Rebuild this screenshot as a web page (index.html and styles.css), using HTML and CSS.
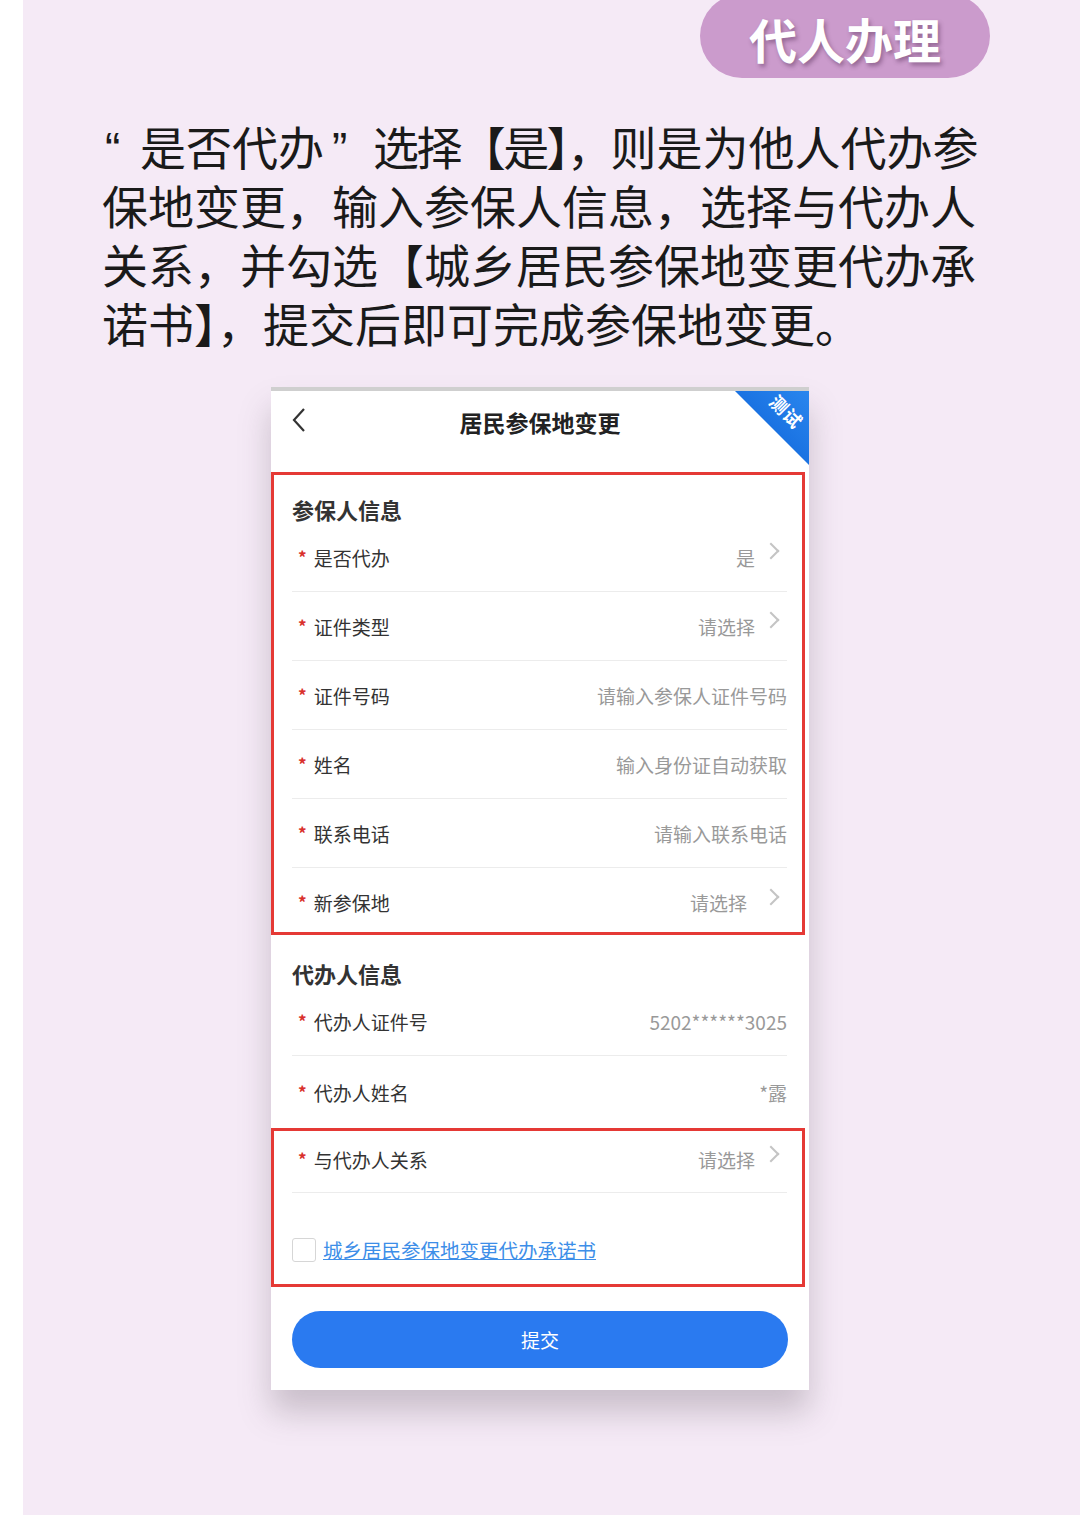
FILE: index.html
```html
<!DOCTYPE html>
<html lang="zh-CN">
<head>
  <meta charset="UTF-8" />
  <meta name="viewport" content="width=device-width, initial-scale=1.0"/>
  <title>代人办理</title>
  <link rel="stylesheet" href="styles.css">
</head>
<body>
  <div class="page">
    <div class="badge-bar">
      <div class="badge">代人办理</div>
    </div>

    <p class="intro"><span class="q open">“</span>是否代办<span class="q close">”</span><span class="tight">选择【是】，</span>则是为他人代办参<br>保地变更，输入参保人信息，选择与代办人<br>关系，并勾选【城乡居民参保地变更代办承<br>诺书】，提交后即可完成参保地变更。</p>

    <div class="phone">
      <div class="ribbon"><span>测试</span></div>
      <div class="topbar">
        <svg class="back" width="16" height="26" viewBox="0 0 16 26"><path d="M13 2 L3 13 L13 24" fill="none" stroke="#333" stroke-width="2.2"/></svg>
        <div class="title">居民参保地变更</div>
      </div>

      <div class="mark first">
        <div class="sec-title">参保人信息</div>
        <div class="row"><span class="label"><i>*</i>是否代办</span><span class="value">是</span><span class="arrow"></span></div>
        <div class="row"><span class="label"><i>*</i>证件类型</span><span class="value">请选择</span><span class="arrow"></span></div>
        <div class="row"><span class="label"><i>*</i>证件号码</span><span class="value">请输入参保人证件号码</span></div>
        <div class="row"><span class="label"><i>*</i>姓名</span><span class="value">输入身份证自动获取</span></div>
        <div class="row"><span class="label"><i>*</i>联系电话</span><span class="value">请输入联系电话</span></div>
        <div class="row last"><span class="label"><i>*</i>新参保地</span><span class="value">请选择</span><span class="arrow wide"></span></div>
      </div>

      <div class="plain">
        <div class="sec-title second">代办人信息</div>
        <div class="row"><span class="label"><i>*</i>代办人证件号</span><span class="value">5202******3025</span></div>
        <div class="row last"><span class="label"><i>*</i>代办人姓名</span><span class="value">*露</span></div>
      </div>

      <div class="mark second-box">
        <div class="row short"><span class="label"><i>*</i>与代办人关系</span><span class="value">请选择</span><span class="arrow"></span></div>
        <div class="agree">
          <span class="check"></span>
          <span class="link">城乡居民参保地变更代办承诺书</span>
        </div>
      </div>

      <div class="submit">提交</div>
    </div>
  </div>
</body>
</html>
```

FILE: styles.css
```css
body {
  margin: 0;
  background: #fff;
  font-family: "Noto Sans CJK SC", "Noto Sans", sans-serif;
}

.page {
  margin-left: 23px;
  background: #f5eaf6;
  min-height: 1515px;
  overflow: hidden;
}

.badge-bar {
  display: flex;
  justify-content: flex-end;
  padding-right: 90px;
}

.badge {
  width: 290px;
  height: 84px;
  margin-top: -6px;
  border-radius: 42px;
  background: #cb9bcc;
  color: #fff;
  font-size: 48px;
  font-weight: 700;
  display: flex;
  align-items: center;
  justify-content: center;
  padding-top: 4px;
  box-sizing: border-box;
  text-shadow: 2px 3px 4px rgba(80, 40, 80, 0.45);
}

.intro {
  margin: 38px 0 0 79px;
  font-size: 46px;
  line-height: 59px;
  color: #1a1a1a;
  white-space: nowrap;
}

.q {
  display: inline-block;
  font-family: "Liberation Sans", sans-serif;
  line-height: 1;
  box-sizing: border-box;
}

.q.open {
  width: 38px;
  padding-left: 3px;
}

.q.close {
  width: 49px;
  padding-left: 8px;
}

.tight {
  letter-spacing: -2.6px;
}

.phone {
  position: relative;
  margin: 35px 0 0 248px;
  width: 538px;
  background: #fff;
  border-top: 4px solid #cfcfcf;
  box-shadow: 0 22px 30px rgba(90, 80, 90, 0.28);
  overflow: hidden;
  padding-bottom: 22px;
}

.ribbon {
  position: absolute;
  top: 0;
  right: 0;
  width: 74px;
  height: 74px;
  background: linear-gradient(45deg, #0a5fd6, #2a86ee);
  clip-path: polygon(0 0, 100% 0, 100% 100%);
}

.ribbon span {
  position: absolute;
  top: 7px;
  right: 3px;
  transform: rotate(45deg);
  color: #fff;
  font-size: 18px;
  font-weight: 700;
  letter-spacing: 1px;
}

.topbar {
  height: 81px;
  display: flex;
  align-items: center;
  justify-content: center;
  position: relative;
}

.back {
  position: absolute;
  left: 20px;
  top: 16px;
}

.title {
  font-size: 23px;
  font-weight: 700;
  color: #222;
  margin-top: -20px;
}

.mark {
  border: 3px solid #e53935;
  margin-right: 4px;
  padding: 0 15px 0 18px;
}

.plain {
  padding: 0 22px 0 21px;
}

.sec-title {
  font-size: 22px;
  font-weight: 700;
  color: #333;
  line-height: 28px;
  padding-top: 20px;
}

.sec-title.second {
  padding-top: 24px;
}

.row {
  height: 69px;
  display: flex;
  align-items: center;
  border-bottom: 1px solid #ececec;
  box-sizing: border-box;
}

.row.last {
  border-bottom: none;
  height: 64px;
  padding-top: 5px;
}

.plain .row.last {
  height: 72px;
  padding-top: 0;
}

.row.short {
  height: 62px;
  padding-bottom: 4px;
}

.label {
  flex: 1;
  font-size: 19px;
  color: #333;
}

.label i {
  font-style: normal;
  font-weight: 700;
  color: #d9302c;
  font-size: 17px;
  margin: 0 7px 0 6px;
  position: relative;
  top: -2px;
}

.value {
  font-size: 19px;
  color: #999;
}

.arrow {
  width: 10px;
  height: 10px;
  border-top: 2px solid #c4c4c4;
  border-right: 2px solid #c4c4c4;
  transform: rotate(45deg);
  margin: -12px 10px 0 10px;
}

.arrow.wide {
  margin-left: 18px;
}

.agree {
  height: 91px;
  display: flex;
  align-items: center;
  padding-top: 22px;
  box-sizing: border-box;
}

.check {
  width: 22px;
  height: 22px;
  border: 1.5px solid #d6d6d6;
  border-radius: 3px;
  margin-right: 7px;
}

.link {
  font-size: 19.5px;
  color: #3d8ee8;
  text-decoration: underline;
}

.submit {
  margin: 24px 21px 0 21px;
  height: 57px;
  border-radius: 29px;
  background: #2a7af0;
  color: #fff;
  font-size: 19px;
  display: flex;
  align-items: center;
  justify-content: center;
}
```
